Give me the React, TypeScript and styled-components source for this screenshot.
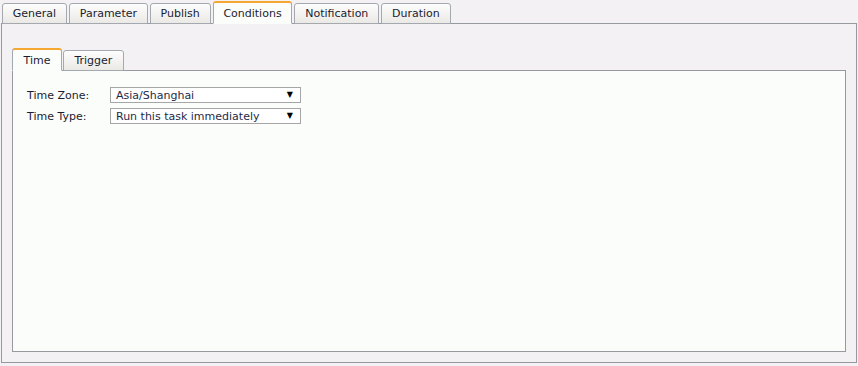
import React from 'react';
import styled, { createGlobalStyle, css } from 'styled-components';

const GlobalStyle = createGlobalStyle`
	html, body {
		margin: 0;
		padding: 0;
		background: #f3f1f4;
	}
	body {
		font-family: 'DejaVu Sans', Verdana, sans-serif;
		font-size: 11px;
		color: #1b1c30;
	}
`;

const Page = styled.div`
	width: 858px;
	height: 366px;
	padding: 1px 0 0 1px;
	box-sizing: border-box;
	display: flex;
	flex-direction: column;
`;

const TabStrip = styled.div<{ $inner?: boolean }>`
	display: flex;
	align-items: flex-end;
	gap: ${({ $inner }) => ($inner ? '1px' : '2px')};
	padding-left: ${({ $inner }) => ($inner ? '0' : '1px')};
	height: 23px;
	position: relative;
	z-index: 1;
	margin-bottom: -1px;
`;

const Tab = styled.div<{ $active?: boolean; $inner?: boolean }>`
	box-sizing: border-box;
	height: 21px;
	padding: 0 ${({ $inner }) => ($inner ? '10.5px' : '9.8px')};
	display: flex;
	align-items: center;
	justify-content: center;
	white-space: nowrap;
	border: 1px solid #a3a9ae;
	border-radius: 3px 3px 0 0;
	background: linear-gradient(#fdfdfd, #ebe9e5);
	color: #1b1c30;
	${({ $active }) =>
		$active &&
		css`
			height: 23px;
			border-top: 2px solid #f5a732;
			border-bottom-color: #fbfdfb;
			background: #fbfdfb;
			padding-top: 1px;
		`}
`;

const OuterPanel = styled.div`
	box-sizing: border-box;
	width: 856px;
	height: 340px;
	border: 1px solid #969a9e;
	padding: 24px 10px 10px;
	display: flex;
	flex-direction: column;
`;

const InnerPanel = styled.div`
	box-sizing: border-box;
	flex: 1;
	border: 1px solid #969a9e;
	background: #fbfdfb;
	padding: 16px 14px;
	display: flex;
	flex-direction: column;
	gap: 5px;
`;

const FormRow = styled.div`
	display: flex;
	align-items: center;
	height: 16px;
`;

const Label = styled.div`
	width: 83px;
	flex-shrink: 0;
`;

const Dropdown = styled.div`
	box-sizing: border-box;
	width: 191px;
	height: 16px;
	border: 1px solid #a6a6a6;
	background: #ffffff;
	display: flex;
	align-items: center;
	justify-content: space-between;
	padding: 0 7px 0 5px;
	color: #1f2a48;
`;

const Arrow = styled.span`
	font-size: 8px;
	color: #000;
	line-height: 1;
`;

const outerTabs = ['General', 'Parameter', 'Publish', 'Conditions', 'Notification', 'Duration'];
const innerTabs = ['Time', 'Trigger'];

const fields = [
	{ label: 'Time Zone:', value: 'Asia/Shanghai' },
	{ label: 'Time Type:', value: 'Run this task immediately' },
];

const App: React.FC = () => {
	return (
		<>
			<GlobalStyle />
			<Page>
				<TabStrip>
					{outerTabs.map((t) => (
						<Tab key={t} $active={t === 'Conditions'}>
							{t}
						</Tab>
					))}
				</TabStrip>
				<OuterPanel>
					<TabStrip $inner>
						{innerTabs.map((t) => (
							<Tab key={t} $inner $active={t === 'Time'}>
								{t}
							</Tab>
						))}
					</TabStrip>
					<InnerPanel>
						{fields.map((f) => (
							<FormRow key={f.label}>
								<Label>{f.label}</Label>
								<Dropdown>
									<span>{f.value}</span>
									<Arrow>▼</Arrow>
								</Dropdown>
							</FormRow>
						))}
					</InnerPanel>
				</OuterPanel>
			</Page>
		</>
	);
};

export default App;
